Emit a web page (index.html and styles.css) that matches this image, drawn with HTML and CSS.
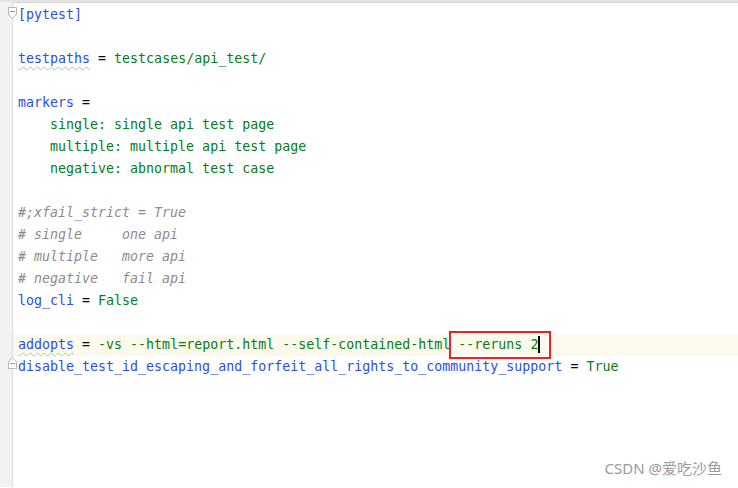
FILE: index.html
```html
<!DOCTYPE html>
<html lang="en">
<head>
    <meta charset="UTF-8">
    <title>pytest.ini</title>
    <link rel="stylesheet" href="styles.css">
</head>
<body>
    <div class="top-bar"></div>
    <div class="editor">
        <div class="gutter">
            <span class="fold fold-open"></span>
            <span class="fold fold-close"></span>
        </div>
        <div class="code">
            <div class="line"><span class="section">[pytest]</span></div>
            <div class="line"></div>
            <div class="line"><span class="key typo">testpaths</span> = <span class="val">testcases/api_test/</span></div>
            <div class="line"></div>
            <div class="line"><span class="key">markers</span> =</div>
            <div class="line"><span class="val">    single: single api test page</span></div>
            <div class="line"><span class="val">    multiple: multiple api test page</span></div>
            <div class="line"><span class="val">    negative: abnormal test case</span></div>
            <div class="line"></div>
            <div class="line comment">#;xfail_strict = True</div>
            <div class="line comment"># single     one api</div>
            <div class="line comment"># multiple   more api</div>
            <div class="line comment"># negative   fail api</div>
            <div class="line"><span class="key">log_cli</span> = <span class="val">False</span></div>
            <div class="line"></div>
            <div class="line current"><span class="key typo">addopts</span> = <span class="val">-vs --html=report.html --self-contained-html <span class="mark">--reruns 2<span class="caret"></span></span></span></div>
            <div class="line"><span class="key">disable_test_id_escaping_and_forfeit_all_rights_to_community_support</span> = <span class="val">True</span></div>
        </div>
    </div>
    <div class="watermark">CSDN @爱吃沙鱼</div>
</body>
</html>
```

FILE: styles.css
```css
* {
    margin: 0;
    padding: 0;
    box-sizing: border-box;
}

body {
    width: 738px;
    height: 488px;
    overflow: hidden;
    background-color: #ffffff;
    position: relative;
}

.top-bar {
    height: 3px;
    background-color: #e4e4e4;
    border-bottom: 1px solid #d4d4d4;
}

.editor {
    display: flex;
    height: 485px;
    margin-top: -1px;
}

.gutter {
    width: 13px;
    flex-shrink: 0;
    background-color: #f2f2f2;
    border-right: 1px solid #dcdcdc;
    position: relative;
}

.fold {
    position: absolute;
    left: 8px;
    width: 9px;
    height: 12px;
    background-color: #b8b8b8;
    z-index: 2;
}

.fold::before {
    content: "";
    position: absolute;
    inset: 1px;
    background-color: #ffffff;
}

.fold::after {
    content: "";
    position: absolute;
    left: 2px;
    width: 5px;
    height: 1px;
    background-color: #9a9a9a;
}

.fold-open {
    top: 5px;
    clip-path: polygon(0 0, 100% 0, 100% 60%, 50% 100%, 0 60%);
}

.fold-open::before {
    clip-path: polygon(0 0, 100% 0, 100% 60%, 50% 100%, 0 60%);
}

.fold-open::after {
    top: 4px;
}

.fold-close {
    top: 355px;
    clip-path: polygon(50% 0, 100% 40%, 100% 100%, 0 100%, 0 40%);
}

.fold-close::before {
    clip-path: polygon(50% 0, 100% 40%, 100% 100%, 0 100%, 0 40%);
}

.fold-close::after {
    top: 6px;
}

.code {
    flex: 1;
    padding-top: 2px;
    padding-left: 5px;
    font-family: "DejaVu Sans Mono", monospace;
    font-size: 13.3px;
    color: #080808;
}

.line {
    height: 22px;
    line-height: 22px;
    white-space: pre;
}

.line.current {
    background-color: #fcfaed;
    margin-left: -18px;
    padding-left: 18px;
}

.section {
    color: #2e4fd8;
}

.key {
    color: #2e4fd8;
}

.val {
    color: #067d17;
}

.comment {
    color: #8c8c8c;
    font-style: italic;
}

.typo {
    text-decoration: underline wavy #a6cc9a;
    text-decoration-thickness: 1px;
    text-underline-offset: 3px;
}

.mark {
    position: relative;
}

.mark::before {
    content: "";
    position: absolute;
    left: -9px;
    top: -6px;
    width: 98px;
    height: 24px;
    border: 2px solid #e3262a;
}

.caret {
    display: inline-block;
    width: 2px;
    height: 17px;
    background-color: #000000;
    vertical-align: -4px;
}

.watermark {
    position: absolute;
    right: 16px;
    bottom: 10px;
    font-family: "Noto Sans", "Noto Sans CJK SC", sans-serif;
    font-size: 15px;
    color: #9a9a9a;
}
```
